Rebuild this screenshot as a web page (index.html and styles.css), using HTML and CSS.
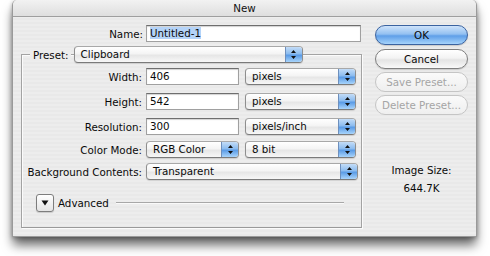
FILE: index.html
```html
<!DOCTYPE html>
<html>
<head>
<meta charset="utf-8">
<link rel="stylesheet" href="styles.css">
</head>
<body>
<div class="stage">
<div class="window">
  <div class="titlebar">New</div>
  <div class="content">
    <div class="main">
      <div class="name-row">
        <span class="label">Name:</span>
        <div class="field name-field"><span class="sel">Untitled-1</span></div>
      </div>
      <div class="group">
        <div class="preset-row">
          <span class="preset-label">Preset:</span>
          <div class="popup preset-popup"><span class="val">Clipboard</span><span class="cap"><svg width="7" height="11" viewBox="0 0 7 11"><path d="M3.5 1 L6 4 L1 4 Z M3.5 10 L6 7 L1 7 Z" fill="#111"/></svg></span></div>
        </div>
        <div class="row r-width">
          <span class="label">Width:</span>
          <div class="field">406</div>
          <div class="popup"><span class="val">pixels</span><span class="cap"><svg width="7" height="11" viewBox="0 0 7 11"><path d="M3.5 1 L6 4 L1 4 Z M3.5 10 L6 7 L1 7 Z" fill="#111"/></svg></span></div>
        </div>
        <div class="row r-height">
          <span class="label">Height:</span>
          <div class="field">542</div>
          <div class="popup"><span class="val">pixels</span><span class="cap"><svg width="7" height="11" viewBox="0 0 7 11"><path d="M3.5 1 L6 4 L1 4 Z M3.5 10 L6 7 L1 7 Z" fill="#111"/></svg></span></div>
        </div>
        <div class="row r-res">
          <span class="label">Resolution:</span>
          <div class="field">300</div>
          <div class="popup"><span class="val">pixels/inch</span><span class="cap"><svg width="7" height="11" viewBox="0 0 7 11"><path d="M3.5 1 L6 4 L1 4 Z M3.5 10 L6 7 L1 7 Z" fill="#111"/></svg></span></div>
        </div>
        <div class="row r-color">
          <span class="label">Color Mode:</span>
          <div class="popup"><span class="val">RGB Color</span><span class="cap"><svg width="7" height="11" viewBox="0 0 7 11"><path d="M3.5 1 L6 4 L1 4 Z M3.5 10 L6 7 L1 7 Z" fill="#111"/></svg></span></div>
          <div class="popup"><span class="val">8 bit</span><span class="cap"><svg width="7" height="11" viewBox="0 0 7 11"><path d="M3.5 1 L6 4 L1 4 Z M3.5 10 L6 7 L1 7 Z" fill="#111"/></svg></span></div>
        </div>
        <div class="row r-bg">
          <span class="label">Background Contents:</span>
          <div class="popup"><span class="val">Transparent</span><span class="cap"><svg width="7" height="11" viewBox="0 0 7 11"><path d="M3.5 1 L6 4 L1 4 Z M3.5 10 L6 7 L1 7 Z" fill="#111"/></svg></span></div>
        </div>
        <div class="advanced">
          <div class="disclosure"><svg width="8" height="6" viewBox="0 0 8 6"><path d="M0.5 0.5 L7.5 0.5 L4 5.5 Z" fill="#111"/></svg></div>
          <span class="adv-label">Advanced</span>
          <div class="adv-line"></div>
        </div>
      </div>
    </div>
    <div class="side">
      <div class="btn btn-ok">OK</div>
      <div class="btn">Cancel</div>
      <div class="btn disabled">Save Preset...</div>
      <div class="btn disabled">Delete Preset...</div>
      <div class="size-info">
        <div>Image Size:</div>
        <div class="size-val">644.7K</div>
      </div>
    </div>
  </div>
</div>
</div>
</body>
</html>
```

FILE: styles.css
```css
html, body {
  margin: 0;
  padding: 0;
  background: #ffffff;
}
body {
  font-family: "DejaVu Sans", "Liberation Sans", sans-serif;
  font-size: 10.3px;
  color: #0a0a0a;
}
.stage {
  height: 256px;
  padding-left: 12px;
  box-sizing: border-box;
}
.window {
  width: 465px;
  height: 237px;
  border: 1px solid #9a9a9a;
  border-top: none;
  border-radius: 5px 5px 0 0;
  background: repeating-linear-gradient(#ededed 0px, #ededed 2px, #e9e9e9 2px, #e9e9e9 4px);
  box-shadow: 0 9px 11px -1px rgba(0,0,0,0.6), 0 1px 4px rgba(0,0,0,0.3);
  box-sizing: border-box;
  display: flex;
  flex-direction: column;
}
.titlebar {
  height: 17px;
  box-sizing: border-box;
  border-bottom: 1px solid #9e9e9e;
  border-radius: 5px 5px 0 0;
  background: linear-gradient(#f2f2f2, #dedede);
  text-align: center;
  line-height: 17px;
  color: #111;
}
.content {
  display: flex;
  padding: 8px 0 0 7px;
}
.main {
  width: 341px;
}
.label {
  text-align: right;
  white-space: nowrap;
}
.name-row {
  display: grid;
  grid-template-columns: 123px 215px;
  column-gap: 3px;
  align-items: center;
}
.field {
  height: 17px;
  box-sizing: border-box;
  border: 1px solid #a0a0a0;
  border-top-color: #6e6e6e;
  background: #fff;
  box-shadow: inset 0 1px 1px rgba(0,0,0,0.18);
  padding-left: 3px;
  line-height: 15px;
}
.sel {
  background: #b4d3f8;
}
.group {
  margin-top: 12px;
  margin-left: 1px;
  width: 341px;
  height: 174px;
  box-sizing: border-box;
  border: 1px solid #a3a3a3;
  border-bottom-color: #9a9a9a;
  box-shadow: 1px 1px 0 #fbfbfb, inset 1px 1px 0 #fbfbfb;
}
.preset-row {
  margin-top: -9px;
  display: flex;
  align-items: center;
  padding-left: 8px;
}
.preset-label {
  background: #ececec;
  padding: 0 2px 0 3px;
  margin-right: 3px;
}
.preset-popup {
  width: 229px;
}
.popup {
  height: 17px;
  box-sizing: border-box;
  border: 1px solid #8e8e8e;
  border-top-color: #a8a8a8;
  border-bottom-color: #7a7a7a;
  border-radius: 4px;
  background: linear-gradient(#ffffff 0%, #f4f4f4 45%, #e6e6e6 55%, #f7f7f7 100%);
  display: flex;
  align-items: center;
  overflow: hidden;
  box-shadow: 0 1px 1px rgba(0,0,0,0.12);
}
.popup .val {
  flex: 1;
  padding-left: 6px;
  line-height: 15px;
  white-space: nowrap;
}
.popup .cap {
  width: 16px;
  height: 100%;
  flex: none;
  border-left: 1px solid #6d8fbd;
  background: linear-gradient(#c3dcf7 0%, #8cbcef 45%, #5a9be6 55%, #a8d4fb 100%);
  display: flex;
  align-items: center;
  justify-content: center;
}
.row {
  display: grid;
  grid-template-columns: 120px 93px 113px;
  column-gap: 4px;
  align-items: center;
}
.row .popup:last-child {
  margin-left: 2px;
}
.row.r-bg {
  grid-template-columns: 120px 212px;
}
.row.r-bg .popup {
  margin-left: 0;
}
.r-width { margin-top: 5px; }
.r-height { margin-top: 8px; }
.r-res { margin-top: 8px; }
.r-color { margin-top: 6px; }
.r-bg { margin-top: 5px; }
.advanced {
  margin-top: 14px;
  margin-left: 14px;
  display: flex;
  align-items: center;
}
.disclosure {
  width: 18px;
  height: 18px;
  box-sizing: border-box;
  border: 1px solid #7d7d7d;
  border-radius: 3px;
  background: linear-gradient(#ffffff, #e4e4e4);
  display: flex;
  align-items: center;
  justify-content: center;
  box-shadow: 0 1px 1px rgba(0,0,0,0.15);
}
.adv-label {
  margin-left: 4px;
}
.adv-line {
  margin-left: 7px;
  width: 228px;
  height: 1px;
  background: #a8a8a8;
  border-bottom: 1px solid #fafafa;
}
.side {
  margin-left: 14px;
  width: 93px;
  display: flex;
  flex-direction: column;
}
.btn {
  height: 20px;
  box-sizing: border-box;
  border: 1px solid #7f7f7f;
  border-radius: 10px;
  background: linear-gradient(#ffffff 0%, #f3f3f3 45%, #e4e4e4 55%, #f9f9f9 100%);
  text-align: center;
  line-height: 18px;
  margin-bottom: 3px;
  box-shadow: 0 1px 1px rgba(0,0,0,0.15);
}
.btn-ok {
  border-color: #3b63a0;
  background: linear-gradient(#cfe4fb 0%, #93c0f1 45%, #5f9fe8 55%, #a6d3fb 100%);
  margin-bottom: 4px;
}
.btn.disabled {
  border-color: #c5c5c5;
  color: #a5a5a5;
  background: linear-gradient(#fafafa, #efefef);
  box-shadow: none;
}
.size-info {
  margin-top: 43px;
  text-align: center;
  line-height: 18px;
}
```
